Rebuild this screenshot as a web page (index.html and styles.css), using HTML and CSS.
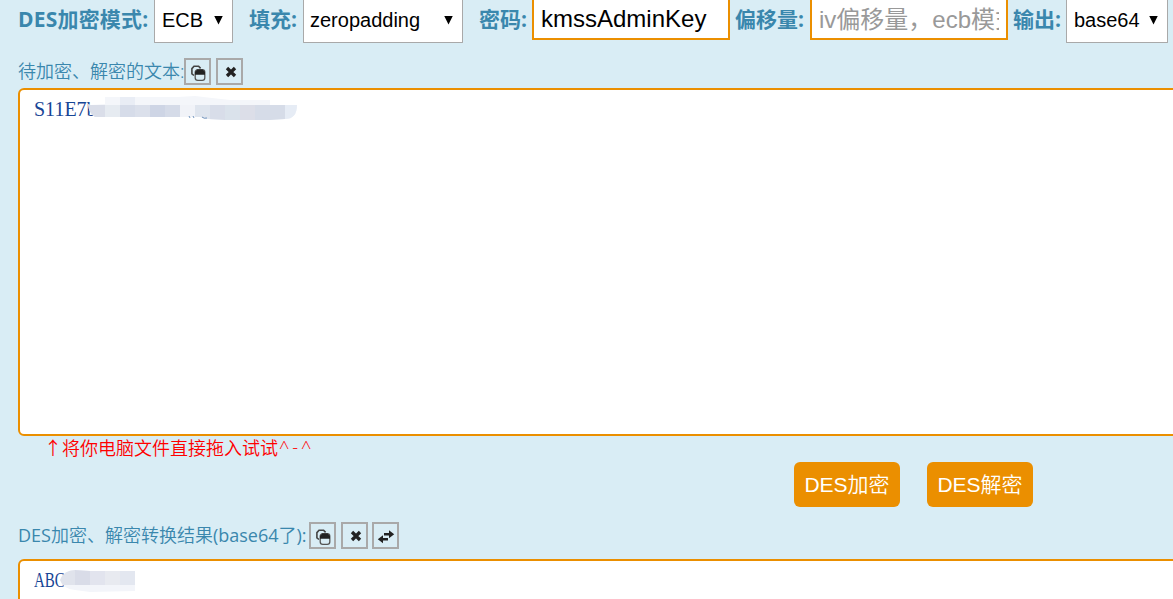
FILE: index.html
```html
<!DOCTYPE html>
<html lang="zh-CN">
<head>
<meta charset="utf-8">
<title>DES加密解密</title>
<link rel="stylesheet" href="styles.css">
</head>
<body>
<svg class="defs" width="0" height="0">
  <symbol id="copy" viewBox="0 0 16 16"><path d="M4 10.500 1.900 8.800V3.600L4 1.200H8.600L10.600 3.400" fill="none" stroke="#444" stroke-width="1.600"/><rect x="5.200" y="4.700" width="9.600" height="10.600" rx="2.600" fill="#d9edf5" stroke="#555" stroke-width="1.300"/><path d="M5 9.800V6.900L7.200 4.500h5.600L15 6.900v2.900z" fill="#222"/></symbol>
  <symbol id="close" viewBox="0 0 16 16"><path d="m4 4 8 8m0-8-8 8" fill="none" stroke="#222" stroke-width="3.300"/></symbol>
  <symbol id="swap" viewBox="0 0 18 16"><path d="M7 4h5V1.300L17.200 5.300 12 9.300V6.600H7zM11 11.600H6v2.700L.8 10.300 6 6.300V9h5z" fill="#222"/></symbol>
</svg>
<main class="page">
  <div class="toolbar">
    <label class="label label-mode">DES加密模式:</label>
    <div class="select select-mode"><span>ECB</span><i class="arrow"></i></div>
    <label class="label label-pad">填充:</label>
    <div class="select select-pad"><span>zeropadding</span><i class="arrow"></i></div>
    <label class="label label-key">密码:</label>
    <div class="field"><span class="value">kmssAdminKey</span></div>
    <label class="label label-iv">偏移量:</label>
    <div class="field field-iv"><span class="value placeholder">iv偏移量，ecb模式</span></div>
    <label class="label label-out">输出:</label>
    <div class="select select-out"><span>base64</span><i class="arrow"></i></div>
  </div>
  <div class="caption caption-source">
    <span class="caption-text source-text">待加密、解密的文本:</span>
    <div class="tool"><svg class="icon"><use href="#copy"/></svg></div>
    <div class="tool"><svg class="icon icon-close"><use href="#close"/></svg></div>
  </div>
  <div class="box box-source">
    <span class="code">S11E7b</span>
    <svg class="mosaic mosaic-source" viewBox="88 96 210 25">
      <clipPath id="c1"><path d="M88 104 91 105 105 104V97H178L195 96 212 98 230 100H270V105H297Q297 119 285 119L270 120H225L208 119 200 117H95Q89 114 88 104z"/></clipPath>
      <g clip-path="url(#c1)">
        <path fill="#f4f6fa" d="M88 96h210v25H88z"/>
        <path fill="#e9edf5" d="M120 97h15v8h-15z"/>
        <path fill="#dadee9" d="M88 105h17v12H88z"/><path fill="#e6ebf1" d="M105 105h15v12h-15z"/>
        <path fill="#d6dce9" d="M120 105h15v12h-15z"/><path fill="#dbe0eb" d="M135 105h15v12h-15z"/>
        <path fill="#ced5e5" d="M150 105h15v12h-15z"/><path fill="#d5dbe8" d="M165 105h15v12h-15z"/>
        <path fill="#f1f3f8" d="M180 105h15v12h-15z"/><path fill="#dfe5ee" d="M195 105h15v15h-15z"/>
        <path fill="#d8dde9" d="M210 105h15v15h-15z"/><path fill="#dae2eb" d="M225 105h15v15h-15z"/>
        <path fill="#dcdee8" d="M240 105h15v15h-15z"/><path fill="#d6dce8" d="M255 105h30v15h-30z"/>
        <path fill="#e6ecf5" d="M285 105h13v15h-13z"/>
      </g>
      <path d="M189 116l1 2m3-2 1 2m8-1q2 2 5 1" fill="none" stroke="#527cae" stroke-width=".8"/>
    </svg>
  </div>
  <p class="hint"><span class="hint-arrow">↑</span><span class="hint-text">将你电脑文件直接拖入试试</span><span class="face">^-^</span></p>
  <div class="actions">
    <button class="action">DES加密</button>
    <button class="action">DES解密</button>
  </div>
  <div class="caption caption-result">
    <span class="caption-text result-text"><span class="latin">DES</span>加密、解密转换结果<span class="latin">(base64</span>了<span class="latin">):</span></span>
    <div class="tool"><svg class="icon"><use href="#copy"/></svg></div>
    <div class="tool"><svg class="icon icon-close"><use href="#close"/></svg></div>
    <div class="tool tool-swap"><svg class="icon icon-swap"><use href="#swap"/></svg></div>
  </div>
  <div class="box box-result">
    <span class="code code-narrow">ABC</span>
    <svg class="mosaic mosaic-result" viewBox="60 569 76 24">
      <clipPath id="c2"><path d="M60 580Q64 570 75 570L90 571H135V591L90 592 75 590Q63 589 60 580z"/></clipPath>
      <g clip-path="url(#c2)">
        <path fill="#f3f5fa" d="M60 569h76v24H60z"/>
        <path fill="#e0e3ec" d="M60 569h15v16H60z"/><path fill="#d9dce8" d="M75 569h15v16H75z"/>
        <path fill="#e2e4ee" d="M90 569h15v16H90z"/><path fill="#e8eaf0" d="M105 569h15v16h-15z"/>
        <path fill="#e3e7f0" d="M120 569h15v16h-15z"/>
      </g>
    </svg>
  </div>
</main>
</body>
</html>
```
FILE: styles.css
```css
* { box-sizing: border-box; }
body {
  margin: 0;
  background: #d9edf5;
  color: #3a87ad;
  font-family: "Open Sans", "Noto Sans CJK SC", sans-serif;
  overflow: hidden;
}
.defs { display: block; }
.page { width: 1173px; height: 599px; padding-left: 18px; overflow: hidden; }
.toolbar { display: flex; height: 43px; align-items: flex-start; white-space: nowrap; }
.label { flex: none; font-size: 21px; font-weight: bold; line-height: 38px; }
.label-mode { width: 136px; letter-spacing: .2px; }
.label-pad { width: 70px; padding-left: 16px; }
.label-key { width: 69px; padding-left: 16px; }
.label-iv { width: 80px; padding-left: 5px; }
.label-out { width: 58px; padding-left: 5px; }
.select {
  display: flex;
  flex: none;
  justify-content: space-between;
  align-items: center;
  height: 43px;
  padding: 0 9px 2px 7px;
  border: 1px solid #a9a9a9;
  border-top: 0;
  border-radius: 0 0 1px 1px;
  background: #fff;
  color: #000;
  font: 20px "Liberation Sans", sans-serif;
}
.select-mode { width: 79px; }
.select-pad { width: 160px; padding-left: 6px; }
.select-out { width: 102px; }
.arrow { width: 9px; height: 9px; background: #000; clip-path: polygon(0 0, 100% 0, 50% 100%); }
.field {
  flex: none;
  width: 198px;
  height: 40px;
  padding: 0 7px;
  border: 2px solid #eb8f00;
  border-top: 0;
  background: #fff;
  color: #000;
  font: 24px/38px "Liberation Sans", "Noto Sans CJK SC", sans-serif;
}
.value { display: block; height: 38px; overflow: hidden; }
.placeholder { color: #999; line-height: 40px; }
.caption { display: flex; height: 27px; gap: 5px; font-size: 18px; line-height: 27px; white-space: nowrap; }
.caption-source { margin-top: 15px; }
.caption-text { flex: none; margin-right: -5px; font-family: "Noto Sans", "Noto Sans CJK SC", sans-serif; font-weight: 350; }
.source-text { width: 166px; }
.result-text { width: 291px; }
.latin { font-family: "Open Sans", sans-serif; font-weight: 400; }
.tool { display: flex; flex: none; justify-content: center; align-items: center; width: 27px; height: 27px; border: 2px solid #a9a9a9; }
.tool-swap { margin-left: -1px; }
.icon { width: 16px; height: 16px; margin: 2px 0 0 1px; }
.icon-close { margin: 1px 0 0 2px; }
.icon-swap { width: 18px; }
.box { position: relative; width: 1200px; border: 2px solid #eb8f00; border-radius: 6px; background: #fff; padding-left: 14px; }
.box-source { height: 348px; margin-top: 3px; }
.box-result { height: 60px; margin-top: 10px; }
.code { display: inline-block; color: #174595; font: 20px/38px "Liberation Serif", serif; transform-origin: left center; }
.code-narrow { transform: scaleX(.75); }
.mosaic { position: absolute; }
.mosaic-source { left: 68px; top: 6px; width: 210px; height: 25px; }
.mosaic-result { left: 40px; top: 8px; width: 76px; height: 24px; }
.hint { display: flex; margin: 0; height: 26px; padding-left: 26px; color: #f00; font: 350 18px/23px "Noto Sans CJK SC", sans-serif; }
.hint-arrow { width: 18px; }
.face { font-family: "Open Sans", sans-serif; letter-spacing: 3px; padding-left: 1px; }
.actions { display: flex; gap: 27px; margin-left: 776px; }
.action {
  width: 106px;
  height: 45px;
  padding: 0 0 3px;
  border: 0;
  border-radius: 6px;
  background: #eb8f00;
  color: #fff;
  font: 350 21px "Liberation Sans", "Noto Sans CJK SC", sans-serif;
}
.caption-result { margin-top: 15px; }
```
